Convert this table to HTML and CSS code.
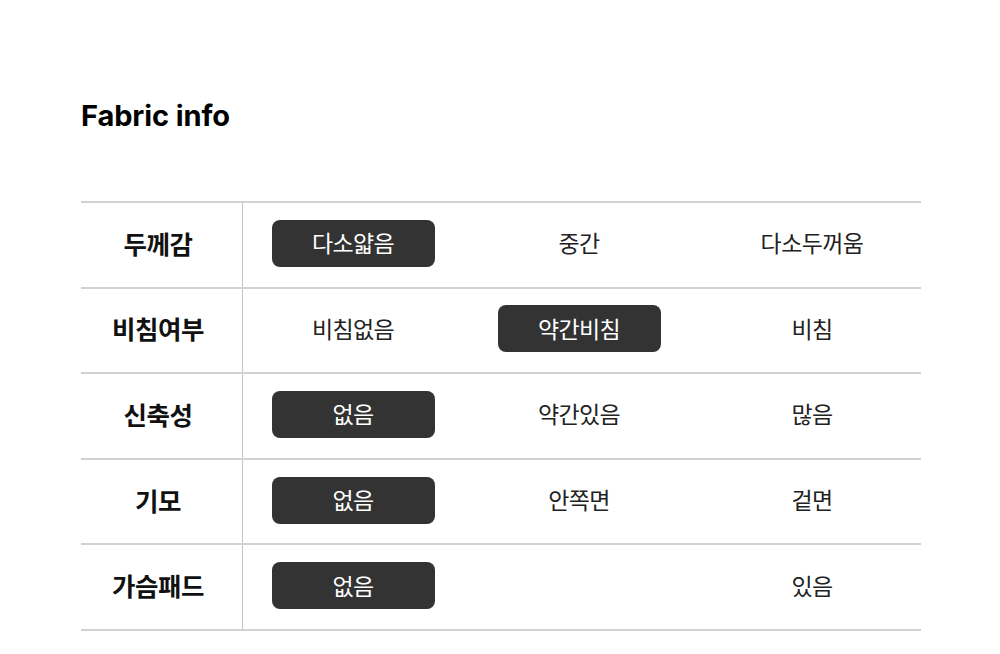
FILE: index.html
```html
<!DOCTYPE html>
<html lang="ko">
<head>
<meta charset="utf-8">
<link rel="stylesheet" href="styles.css">
</head>
<body>
<div class="page">
  <h2 class="title">Fabric info</h2>
  <div class="table">
    <div class="row">
      <div class="label">두께감</div>
      <div class="cell"><span class="opt on">다소얇음</span></div>
      <div class="cell"><span class="opt">중간</span></div>
      <div class="cell"><span class="opt">다소두꺼움</span></div>
    </div>
    <div class="row">
      <div class="label">비침여부</div>
      <div class="cell"><span class="opt">비침없음</span></div>
      <div class="cell"><span class="opt on">약간비침</span></div>
      <div class="cell"><span class="opt">비침</span></div>
    </div>
    <div class="row">
      <div class="label">신축성</div>
      <div class="cell"><span class="opt on">없음</span></div>
      <div class="cell"><span class="opt">약간있음</span></div>
      <div class="cell"><span class="opt">많음</span></div>
    </div>
    <div class="row">
      <div class="label">기모</div>
      <div class="cell"><span class="opt on">없음</span></div>
      <div class="cell"><span class="opt">안쪽면</span></div>
      <div class="cell"><span class="opt">겉면</span></div>
    </div>
    <div class="row">
      <div class="label">가슴패드</div>
      <div class="cell"><span class="opt on">없음</span></div>
      <div class="cell"></div>
      <div class="cell"><span class="opt">있음</span></div>
    </div>
  </div>
</div>
</body>
</html>
```
FILE: styles.css
```css
html, body {
  margin: 0;
  padding: 0;
  background: #fff;
}
body {
  font-family: Inter, "Noto Sans CJK KR", sans-serif;
  color: #111;
}
.page {
  padding: 96px 79px 0 81px;
}
.title {
  margin: 0;
  font-size: 29px;
  font-weight: 700;
  line-height: 40px;
  letter-spacing: -0.1px;
  color: #000;
}
.table {
  margin-top: 65px;
  border-top: 2px solid #d2d2d2;
}
.row {
  display: grid;
  grid-template-columns: 162px 220px 232px 1fr;
  height: 83.6px;
  border-bottom: 2px solid #d2d2d2;
}
.label {
  display: flex;
  align-items: center;
  justify-content: center;
  padding-bottom: 5px;
  padding-right: 7px;
  border-right: 1px solid #c4c4c4;
  font-family: "Noto Sans CJK KR", sans-serif;
  font-size: 25.5px;
  font-weight: 700;
  color: #111;
  letter-spacing: -0.5px;
}
.cell {
  display: flex;
  align-items: center;
  justify-content: center;
  padding-bottom: 3px;
}
.cell:last-child {
  padding-left: 8px;
}
.opt {
  display: flex;
  align-items: center;
  justify-content: center;
  width: 163px;
  height: 47px;
  padding-bottom: 2px;
  box-sizing: border-box;
  border-radius: 8px;
  font-family: "Noto Sans CJK KR", sans-serif;
  font-size: 23px;
  font-weight: 400;
  color: #222;
  letter-spacing: -0.6px;
}
.opt.on {
  background: #333;
  color: #fff;
}
```
